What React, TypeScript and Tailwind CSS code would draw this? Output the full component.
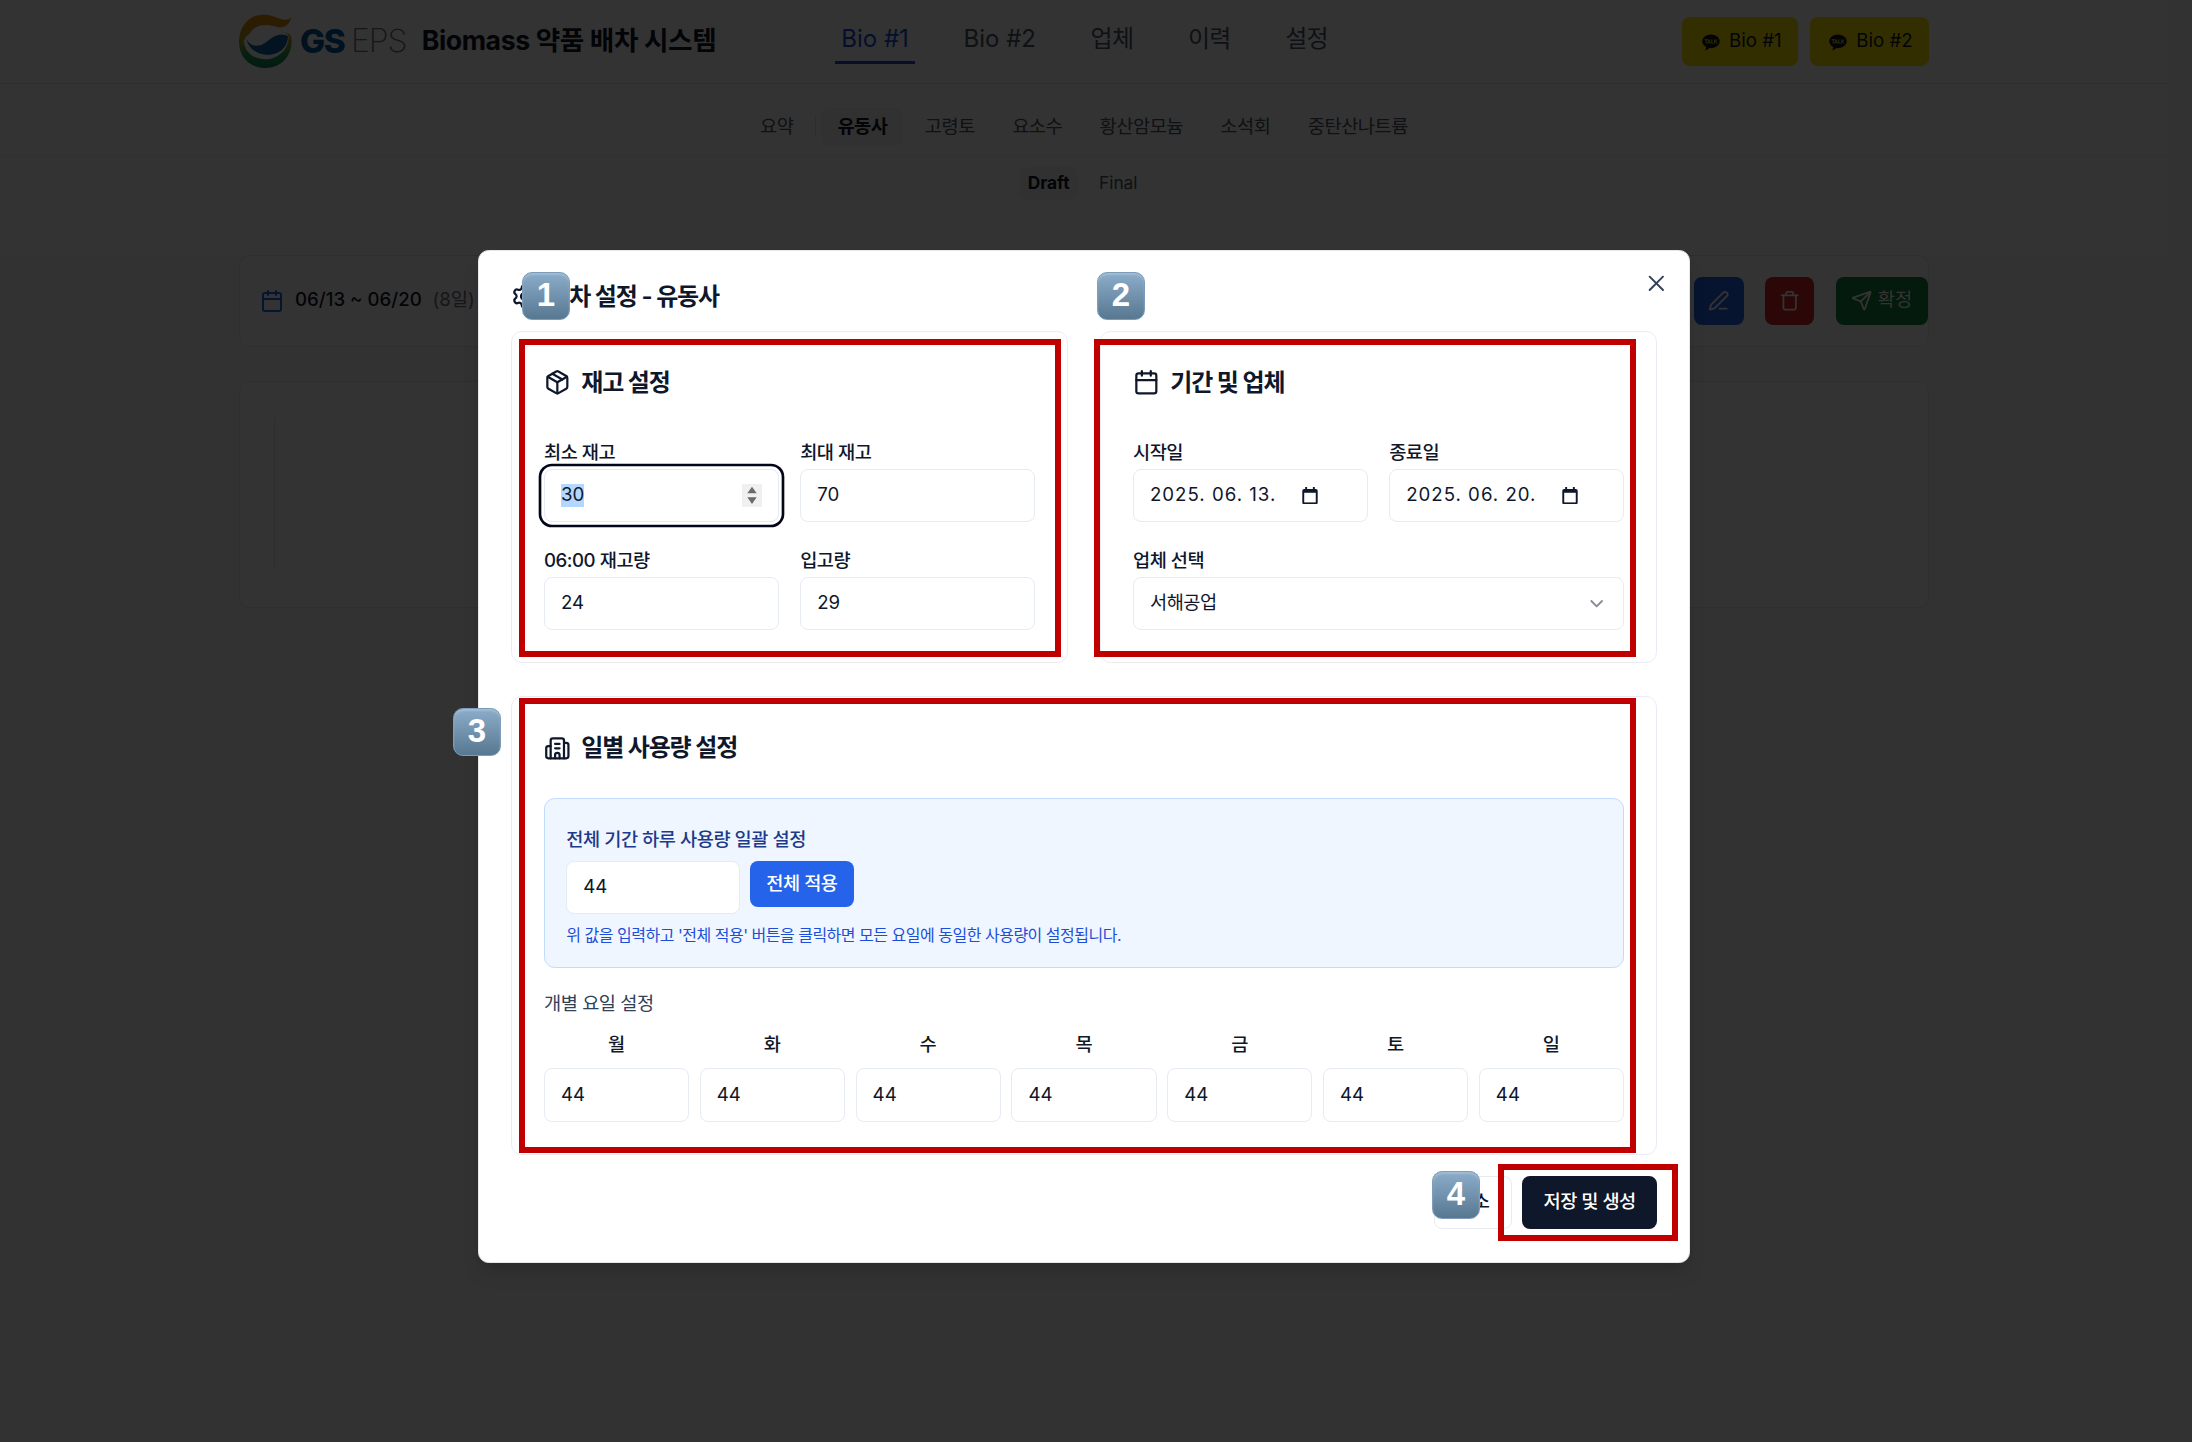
import type { ReactNode } from "react"
import { Calendar, ChevronDown, Building2, Package, PenLine, Send, Settings, Trash, X } from "lucide-react"
import { RiKakaoTalkFill } from "react-icons/ri"

const sans = "font-[Inter,'Noto_Sans_CJK_KR',sans-serif]"

const koreanNav = ["업체", "이력", "설정"]
const tabs = ["고령토", "요소수", "황산암모늄", "소석회", "중탄산나트륨"]
const days = ["월", "화", "수", "목", "금", "토", "일"]

const redBoxes = [
  "left-[519px] top-[339px] w-[542px] h-[318px]",
  "left-[1094px] top-[339px] w-[542px] h-[318px]",
  "left-[519px] top-[698px] w-[1117px] h-[455px]",
  "left-[1498px] top-[1164px] w-[180px] h-[77px]",
]

const badges = [
  { n: "1", pos: "left-[522px] top-[272px]" },
  { n: "2", pos: "left-[1097px] top-[272px]" },
  { n: "3", pos: "left-[453px] top-[708px]" },
  { n: "4", pos: "left-[1432px] top-[1171px]" },
]

function Logo() {
  return (
    <div className="flex items-center">
      <svg viewBox="0 0 156 162" className="h-[41px] w-[39.5px]">
        <defs>
          <linearGradient id="ring" x1="0" y1="0" x2="0" y2="1">
            <stop offset="0" stopColor="#f08300" />
            <stop offset="0.5" stopColor="#a8a020" />
            <stop offset="0.75" stopColor="#1f9a50" />
            <stop offset="1" stopColor="#0f8a60" />
          </linearGradient>
        </defs>
        <path
          d="M155 10C140 28 115 8 85 3C35-5 0 35 0 82C0 130 35 160 78 160C125 160 156 125 156 80C156 72 154 66 150 60C110 40 70 50 30 62C45 30 80 28 110 38C130 44 150 35 155 10Z"
          fill="url(#ring)"
        />
        <path d="M14 82C22 52 60 38 100 46C125 50 140 54 147 64C148 110 112 136 72 134C40 132 18 110 14 82Z" fill="#ffffff" />
        <path d="M22 75C35 100 60 100 85 80C105 62 125 55 145 65C145 105 110 125 75 120C50 118 28 100 22 75Z" fill="#0a64a8" />
      </svg>
      <span className="ml-[6px] text-[25px] leading-none font-extrabold tracking-[-1px] text-[#00599f]">GS</span>
      <span className="ml-[5px] text-[24px] leading-none font-extralight tracking-[-0.8px] text-gray-500">EPS</span>
    </div>
  )
}

function KakaoButton({ label }: { label: string }) {
  return (
    <button className="flex h-[37px] items-center gap-1.5 rounded-md bg-[#FEE500] pr-3 pl-[14px] text-sm text-gray-900">
      <RiKakaoTalkFill className="h-[15px] w-[15px]" />
      {label}
    </button>
  )
}

function Background() {
  return (
    <div className="w-[1626px]">
      <header className="h-[63px] border-b border-gray-200 bg-white">
        <div className="mx-auto flex h-full w-[1267px] items-center">
          <div className="flex w-[447px] shrink-0 items-center gap-[11.5px]">
            <Logo />
            <span className="pb-[1px] text-xl font-bold tracking-[-0.015em] text-gray-900">Biomass 약품 배차 시스템</span>
          </div>
          <nav className="flex h-full items-center gap-8 pb-[4px] text-lg text-gray-600">
            <span className="relative px-[4.5px] text-[#1d4ed8]">
              Bio #1
              <span className="absolute right-0 -bottom-[5px] left-0 h-[2px] bg-[#1d4ed8]" />
            </span>
            <span className="px-[4.5px]">Bio #2</span>
            {koreanNav.map((item) => (
              <span key={item} className="px-[4.5px] tracking-[-0.03em]">
                {item}
              </span>
            ))}
          </nav>
          <div className="ml-auto flex gap-[9px]">
            <KakaoButton label="Bio #1" />
            <KakaoButton label="Bio #2" />
          </div>
        </div>
      </header>

      <div className="flex h-[54px] items-start justify-center gap-1 border-b border-gray-100 bg-white pt-[18px] text-sm tracking-[-0.025em] text-gray-600">
        <span className="flex h-[28.5px] items-center px-3">요약</span>
        <span className="mt-[6px] h-[16px] w-px bg-gray-200" />
        <span className="flex h-[28.5px] items-center rounded-md bg-gray-100 px-3 font-semibold text-gray-900">유동사</span>
        {tabs.map((tab) => (
          <span key={tab} className="flex h-[28.5px] items-center px-3">
            {tab}
          </span>
        ))}
      </div>

      <div className="flex h-[74px] items-start justify-center gap-2 bg-white pt-[8px] text-[13px]">
        <span className="flex h-[25px] items-center rounded-md bg-gray-100 px-[6px] font-bold text-gray-900">Draft</span>
        <span className="flex h-[25px] items-center px-2 text-gray-600">Final</span>
      </div>

      <main className="mx-auto w-[1267px]">
        <div className="flex h-[69px] items-center justify-between rounded-lg border border-gray-200 bg-white pl-[15px]">
          <div className="flex items-center">
            <Calendar className="h-[18px] w-[18px] text-[#2563eb]" />
            <span className="ml-2 text-sm font-medium text-gray-900">06/13 ~ 06/20</span>
            <span className="ml-2 text-sm text-gray-500">(8일)</span>
          </div>
          <div className="flex gap-4">
            <button className="flex h-9 w-[37px] items-center justify-center rounded-md bg-[#2563eb] text-white">
              <PenLine className="h-4 w-4" />
            </button>
            <button className="flex h-9 w-[37px] items-center justify-center rounded-md bg-[#dc2626] text-white">
              <Trash className="h-4 w-4" />
            </button>
            <button className="flex h-9 w-[69px] items-center justify-center gap-1 rounded-md bg-[#15803d] text-sm text-white">
              <Send className="h-4 w-4" />
              확정
            </button>
          </div>
        </div>
        <div className="mt-[26px] h-[170px] rounded-lg border border-gray-200 bg-white pt-[26px] pl-[25px]">
          <div className="h-[115px] border-l border-gray-200" />
        </div>
      </main>
    </div>
  )
}

function Box({ children, className = "" }: { children?: ReactNode; className?: string }) {
  return (
    <div className={`flex h-10 items-center rounded-md border border-[#e6ebf2] bg-white px-3 text-sm text-slate-900 ${className}`}>
      {children}
    </div>
  )
}

function Field({ label, children }: { label: string; children: ReactNode }) {
  return (
    <div>
      <div className="h-6 pt-[2.5px] text-sm leading-5 font-medium tracking-[-0.025em] text-slate-900">{label}</div>
      {children}
    </div>
  )
}

function Card({ icon, title, children, className = "" }: { icon: ReactNode; title: string; children: ReactNode; className?: string }) {
  return (
    <section className={`rounded-lg border border-[#e9edf3] bg-white p-6 ${className}`}>
      <h3 className="mb-6 flex h-7 items-center gap-2 text-lg font-semibold tracking-[-0.05em] text-slate-900">
        {icon}
        {title}
      </h3>
      {children}
    </section>
  )
}

function DateGlyph() {
  return (
    <svg viewBox="0 0 16 18" className="h-[13px] w-[12px] shrink-0 text-slate-900">
      <path d="M3 0h2v2h6V0h2v2h1a2 2 0 0 1 2 2v12a2 2 0 0 1-2 2H2a2 2 0 0 1-2-2V4a2 2 0 0 1 2-2h1V0Z" fill="currentColor" />
      <rect x="2" y="6" width="12" height="10" fill="#ffffff" />
    </svg>
  )
}

function Spinner() {
  return (
    <svg viewBox="0 0 15 17" className="h-[17px] w-[15px] bg-[#f0f0f0]">
      <path d="M7.5 2 11 7H4ZM7.5 15 4 10h7Z" fill="#6b6b6b" />
    </svg>
  )
}

function Modal() {
  return (
    <div className={`relative w-[909px] rounded-lg border border-gray-200 bg-white p-6 pb-[24.5px] shadow-lg ${sans}`}>
      <button className="absolute top-[14.5px] right-[14.5px] text-slate-700">
        <X className="h-5 w-5" strokeWidth={1.75} />
      </button>
      <h2 className="mb-4 flex h-5 items-center gap-2 text-lg font-semibold tracking-[-0.05em] text-slate-900">
        <Settings className="h-5 w-5" />
        배차 설정 - 유동사
      </h2>

      <div className="grid grid-cols-2 gap-6">
        <Card icon={<Package className="h-5 w-5" />} title="재고 설정">
          <div className="grid grid-cols-2 gap-x-4 gap-y-[17px] pt-[2.5px]">
            <Field label="최소 재고">
              <Box className="justify-between ring-2 ring-slate-950 ring-offset-2">
                <span className="bg-[#b3d7ff] leading-[17px]">30</span>
                <Spinner />
              </Box>
            </Field>
            <Field label="최대 재고">
              <Box>70</Box>
            </Field>
            <Field label="06:00 재고량">
              <Box>24</Box>
            </Field>
            <Field label="입고량">
              <Box>29</Box>
            </Field>
          </div>
        </Card>

        <Card icon={<Calendar className="h-5 w-5" />} title="기간 및 업체">
          <div className="grid grid-cols-2 gap-x-4 gap-y-[17px] pt-[2.5px]">
            <Field label="시작일">
              <Box className="gap-[19px]">
                <span className="tracking-[0.75px]">2025. 06. 13.</span>
                <DateGlyph />
              </Box>
            </Field>
            <Field label="종료일">
              <Box className="gap-[19px]">
                <span className="tracking-[0.75px]">2025. 06. 20.</span>
                <DateGlyph />
              </Box>
            </Field>
            <div className="col-span-2">
              <Field label="업체 선택">
                <Box className="justify-between tracking-[-0.025em]">
                  서해공업
                  <ChevronDown className="h-4 w-4 opacity-50" />
                </Box>
              </Field>
            </div>
          </div>
        </Card>
      </div>

      <Card icon={<Building2 className="h-5 w-5" />} title="일별 사용량 설정" className="mt-[25px]">
        <div className="rounded-lg border border-[#bfdbfe] bg-[#eff6ff] p-4">
          <div className="mb-[5.3px] pt-[4.7px] text-sm leading-5 font-medium tracking-[-0.025em] text-[#1e3a8a]">전체 기간 하루 사용량 일괄 설정</div>
          <div className="flex items-start gap-2">
            <Box className="w-[130px]">44</Box>
            <button className="h-[35px] rounded-md bg-[#2563eb] px-3 text-sm font-medium tracking-[-0.025em] text-white">전체 적용</button>
          </div>
          <p className="mt-2 text-xs tracking-[-0.03em] text-[#1d4ed8]">위 값을 입력하고 '전체 적용' 버튼을 클릭하면 모든 요일에 동일한 사용량이 설정됩니다.</p>
        </div>
        <div className="mt-[17px] mb-[11px] text-sm leading-5 tracking-[-0.025em] text-slate-700">개별 요일 설정</div>
        <div className="grid grid-cols-7 gap-2">
          {days.map((day) => (
            <div key={day}>
              <div className="mb-[7px] text-center text-sm leading-5 font-medium text-slate-900">{day}</div>
              <Box>44</Box>
            </div>
          ))}
        </div>
      </Card>

      <div className="mt-4 flex justify-end gap-2 tracking-[-0.025em]">
        <button className="h-10 rounded-md border border-[#e6ebf2] bg-white px-4 text-sm font-medium text-slate-900">취소</button>
        <button className="h-10 rounded-md bg-[#0f172a] px-4 text-sm font-medium text-white">저장 및 생성</button>
      </div>
    </div>
  )
}

export default function App() {
  return (
    <div className={`relative h-[1442px] w-[2192px] overflow-hidden bg-gray-50 ${sans}`}>
      <div className="[zoom:1.3333]">
        <Background />
      </div>
      <div className="absolute inset-0 bg-black/80" />
      <div className="absolute top-[250px] left-[478px]">
        <div className="[zoom:1.3333]">
          <Modal />
        </div>
      </div>
      {redBoxes.map((pos) => (
        <div key={pos} className={`pointer-events-none absolute border-[6px] border-[#c00000] ${pos}`} />
      ))}
      {badges.map((b) => (
        <div
          key={b.n}
          className={`absolute flex h-[48px] w-[48px] items-center justify-center rounded-[10px] border border-[#7c9cb9] bg-gradient-to-b from-[#8cadca] to-[#587891] pb-[3px] font-['Liberation_Sans',sans-serif] text-[33px] font-bold text-white shadow-[inset_0_2px_2px_rgba(255,255,255,0.2)] ${b.pos}`}
        >
          {b.n}
        </div>
      ))}
    </div>
  )
}
